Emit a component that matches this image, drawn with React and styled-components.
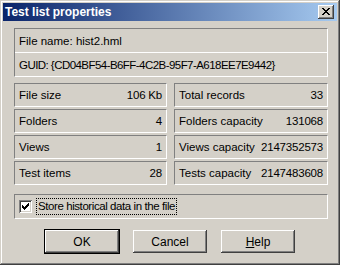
import React from 'react';
import styled, { createGlobalStyle } from 'styled-components';

const GlobalStyle = createGlobalStyle`
  body {
    margin: 0;
    background: #d4d0c8;
    font-family: "Liberation Sans", Arial, sans-serif;
  }
`;

const CLOSE_GLYPH = [
    'XX....XX',
    '.XX..XX.',
    '..XXXX..',
    '...XX...',
    '..XXXX..',
    '.XX..XX.',
    'XX....XX',
];

const CHECK_GLYPH = [
    '......X',
    '.....XX',
    'X...XXX',
    'XX.XXX.',
    'XXXXX..',
    '.XXX...',
    '..X....',
];

const PixelGlyph = ({rows}) => (
    <svg width={rows[0].length} height={rows.length} shapeRendering="crispEdges">
        {rows.map((row, y) =>
            row.split('').map((c, x) =>
                c === 'X' ? <rect key={x + '-' + y} x={x} y={y} width="1" height="1" fill="#000"/> : null
            )
        )}
    </svg>
);

const stats = [
    ['File size', '106 Kb', 'Total records', '33'],
    ['Folders', '4', 'Folders capacity', '131068'],
    ['Views', '1', 'Views capacity', '2147352573'],
    ['Test items', '28', 'Tests capacity', '2147483608'],
];

const App = () => {
    return (
        <>
            <GlobalStyle/>
            <Window>
                <TitleBar>
                    <Title>Test list properties</Title>
                    <CloseButton>
                        <PixelGlyph rows={CLOSE_GLYPH}/>
                    </CloseButton>
                </TitleBar>
                <Body>
                    <InfoPanel>
                        <InfoRow>File name: hist2.hml</InfoRow>
                        <InfoRow $last $tight>GUID: {'{'}CD04BF54-B6FF-4C2B-95F7-A618EE7E9442{'}'}</InfoRow>
                    </InfoPanel>
                    <StatsGrid>
                        {stats.map(([l1, v1, l2, v2]) => (
                            <React.Fragment key={l1}>
                                <StatBox>
                                    <span>{l1}</span>
                                    <Value>{v1}</Value>
                                </StatBox>
                                <StatBox>
                                    <span>{l2}</span>
                                    <Value>{v2}</Value>
                                </StatBox>
                            </React.Fragment>
                        ))}
                    </StatsGrid>
                    <CheckPanel>
                        <CheckBox>
                            <PixelGlyph rows={CHECK_GLYPH}/>
                        </CheckBox>
                        <CheckLabel>Store historical data in the file</CheckLabel>
                    </CheckPanel>
                    <Buttons>
                        <Button $default>OK</Button>
                        <Button>Cancel</Button>
                        <Button><u>H</u>elp</Button>
                    </Buttons>
                </Body>
            </Window>
        </>
    )
}

const Window = styled.div`
  width: 340px;
  height: 265px;
  box-sizing: border-box;
  padding: 3px;
  background: #d4d0c8;
  box-shadow: inset -1px -1px #404040, inset 1px 1px #d4d0c8,
              inset -2px -2px #808080, inset 2px 2px #ffffff;
  display: flex;
  flex-direction: column;
`;

const TitleBar = styled.div`
  height: 18px;
  display: flex;
  align-items: center;
  justify-content: space-between;
  padding: 0 3px 0 2px;
  background: linear-gradient(to right, #0a246a, #a6caf0);
`;

const Title = styled.div`
  color: #fff;
  font-weight: bold;
  font-size: 12px;
`;

const CloseButton = styled.div`
  width: 16px;
  height: 14px;
  box-sizing: border-box;
  display: flex;
  align-items: center;
  justify-content: center;
  background: #d4d0c8;
  box-shadow: inset -1px -1px #404040, inset 1px 1px #ffffff,
              inset -2px -2px #808080, inset 2px 2px #d4d0c8;
  svg {
    margin-top: -1px;
  }
`;

const Body = styled.div`
  display: flex;
  flex-direction: column;
  padding: 7px 9px 0 11px;
  font-size: 11.5px;
  color: #000;
`;

const sunken = `
  border-top: 1px solid #808080;
  border-left: 1px solid #808080;
  border-right: 1px solid #ffffff;
  border-bottom: 1px solid #ffffff;
`;

const InfoPanel = styled.div`
  ${sunken}
  display: flex;
  flex-direction: column;
`;

const InfoRow = styled.div`
  height: 23px;
  display: flex;
  align-items: center;
  padding-left: 4px;
  letter-spacing: ${({$tight}) => $tight ? '-0.55px' : '0'};
  border-bottom: ${({$last}) => $last ? 'none' : '1px solid #ffffff'};
`;

const StatsGrid = styled.div`
  display: grid;
  grid-template-columns: 153px 154px;
  column-gap: 7px;
  row-gap: 2px;
  margin-top: 6px;
`;

const StatBox = styled.div`
  ${sunken}
  height: 22px;
  display: flex;
  align-items: center;
  justify-content: space-between;
  padding: 0 4px 0 4px;
`;

const Value = styled.span`
  letter-spacing: -0.2px;
`;

const CheckPanel = styled.div`
  ${sunken}
  height: 23px;
  margin-top: 9px;
  display: flex;
  align-items: center;
  padding-left: 4px;
`;

const CheckBox = styled.div`
  width: 13px;
  height: 13px;
  box-sizing: border-box;
  background: #fff;
  display: flex;
  align-items: center;
  justify-content: center;
  box-shadow: inset 1px 1px #808080, inset -1px -1px #ffffff,
              inset 2px 2px #404040, inset -2px -2px #d4d0c8;
`;

const CheckLabel = styled.span`
  margin-left: 4px;
  padding: 1px 1px 2px 1px;
  border: 1px dotted #000;
  letter-spacing: -0.42px;
`;

const Buttons = styled.div`
  display: flex;
  justify-content: center;
  gap: 12px;
  margin-top: 10px;
  margin-left: -2px;
`;

const Button = styled.div`
  width: 76px;
  height: 25px;
  box-sizing: border-box;
  display: flex;
  align-items: center;
  justify-content: center;
  font-size: 12px;
  background: #d4d0c8;
  border: 1px solid ${({$default}) => $default ? '#000' : 'transparent'};
  box-shadow: inset -1px -1px #404040, inset 1px 1px #ffffff,
              inset -2px -2px #808080, inset 2px 2px #d4d0c8;
  u {
    text-decoration: underline;
  }
`;

export default App;
